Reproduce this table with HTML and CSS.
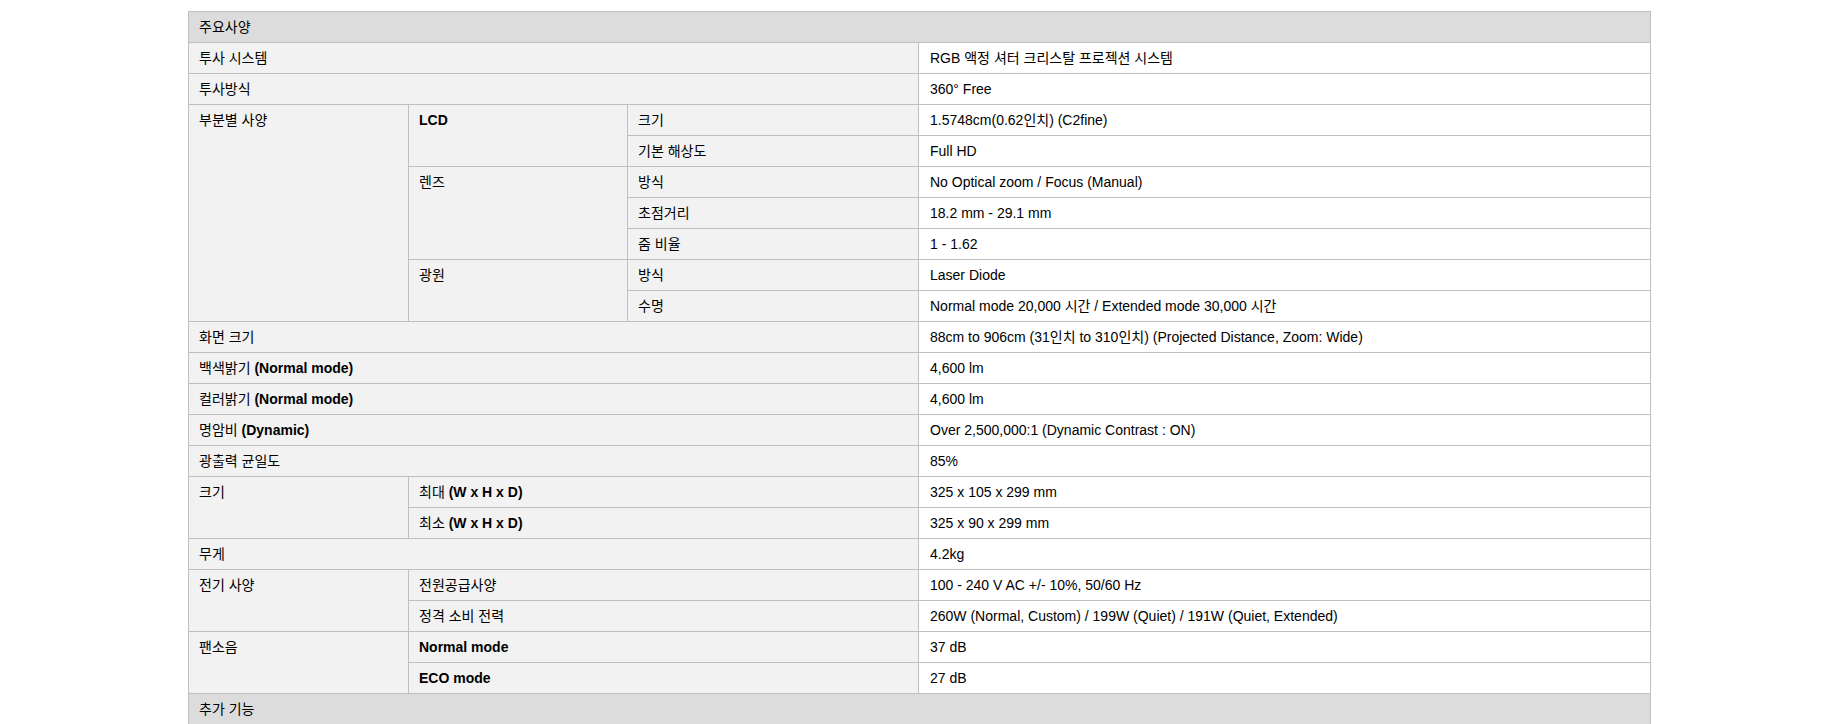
FILE: index.html
```html
<!DOCTYPE html>
<html lang="ko">
<head>
<meta charset="utf-8">
<title>주요사양</title>
<link rel="stylesheet" href="styles.css">
</head>
<body>
<table class="spec">
  <colgroup>
    <col class="c1"><col class="c2"><col class="c3"><col class="c4">
  </colgroup>
  <tbody>
    <tr class="sec"><th colspan="4">주요사양</th></tr>
    <tr><th colspan="3">투사 시스템</th><td>RGB 액정 셔터 크리스탈 프로젝션 시스템</td></tr>
    <tr><th colspan="3">투사방식</th><td>360° Free</td></tr>
    <tr><th rowspan="7">부분별 사양</th><th rowspan="2"><b>LCD</b></th><th class="n">크기</th><td>1.5748cm(0.62인치) (C2fine)</td></tr>
    <tr><th class="n">기본 해상도</th><td>Full HD</td></tr>
    <tr><th rowspan="3">렌즈</th><th class="n">방식</th><td>No Optical zoom / Focus (Manual)</td></tr>
    <tr><th class="n">초점거리</th><td>18.2 mm - 29.1 mm</td></tr>
    <tr><th class="n">줌 비율</th><td>1 - 1.62</td></tr>
    <tr><th rowspan="2">광원</th><th class="n">방식</th><td>Laser Diode</td></tr>
    <tr><th class="n">수명</th><td>Normal mode 20,000 시간 / Extended mode 30,000 시간</td></tr>
    <tr><th colspan="3">화면 크기</th><td>88cm to 906cm (31인치 to 310인치) (Projected Distance, Zoom: Wide)</td></tr>
    <tr><th colspan="3">백색밝기 <b>(Normal mode)</b></th><td>4,600 lm</td></tr>
    <tr><th colspan="3">컬러밝기 <b>(Normal mode)</b></th><td>4,600 lm</td></tr>
    <tr><th colspan="3">명암비 <b>(Dynamic)</b></th><td>Over 2,500,000:1 (Dynamic Contrast : ON)</td></tr>
    <tr><th colspan="3">광출력 균일도</th><td>85%</td></tr>
    <tr><th rowspan="2">크기</th><th colspan="2">최대 <b>(W x H x D)</b></th><td>325 x 105 x 299 mm</td></tr>
    <tr><th colspan="2">최소 <b>(W x H x D)</b></th><td>325 x 90 x 299 mm</td></tr>
    <tr><th colspan="3">무게</th><td>4.2kg</td></tr>
    <tr><th rowspan="2">전기 사양</th><th colspan="2">전원공급사양</th><td>100 - 240 V AC +/- 10%, 50/60 Hz</td></tr>
    <tr><th colspan="2">정격 소비 전력</th><td>260W (Normal, Custom) / 199W (Quiet) / 191W (Quiet, Extended)</td></tr>
    <tr><th rowspan="2">팬소음</th><th colspan="2"><b>Normal mode</b></th><td>37 dB</td></tr>
    <tr><th colspan="2"><b>ECO mode</b></th><td>27 dB</td></tr>
    <tr class="sec"><th colspan="4">추가 기능</th></tr>
  </tbody>
</table>
</body>
</html>
```

FILE: styles.css
```css
html, body {
  margin: 0;
  padding: 0;
  background: #ffffff;
}

body {
  font-family: "Liberation Sans", Arial, "Noto Sans CJK KR", sans-serif;
  font-size: 14px;
  color: #000000;
}

.spec {
  width: 1463px;
  margin: 11px 0 0 188px;
  border-collapse: collapse;
  table-layout: fixed;
}

.spec .c1 { width: 220px; }
.spec .c2 { width: 219px; }
.spec .c3 { width: 291px; }

.spec th,
.spec td {
  border: 1px solid #bfbfbf;
  padding: 7px 10px;
  line-height: 16px;
  height: 16px;
  text-align: left;
  vertical-align: top;
  font-weight: normal;
  white-space: nowrap;
}

.spec th {
  background: #f2f2f2;
}

.spec td {
  background: #ffffff;
  padding-left: 11px;
}

.spec b {
  font-weight: bold;
}

.spec .sec th {
  background: #dcdcdc;
}
```
